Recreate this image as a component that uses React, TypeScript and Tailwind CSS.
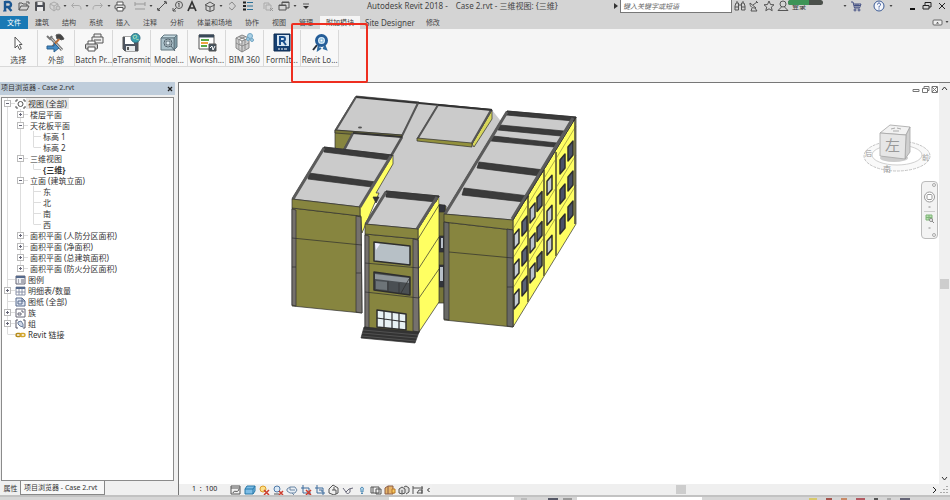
import type { ReactNode } from 'react'
import clsx from 'clsx'

interface IconProps {
  w?: number
  h?: number
  children: ReactNode
  className?: string
}

function Icon({ w = 12, h = 12, children, className }: IconProps) {
  return (
    <svg
      width={w}
      height={h}
      viewBox={`0 0 ${w} ${h}`}
      fill="none"
      stroke="#555"
      strokeWidth="1"
      className={clsx('shrink-0', className)}
      aria-hidden="true"
    >
      {children}
    </svg>
  )
}

const icons = {
  revit: (
    <Icon>
      <path d="M3 1v10M3 2h3.500a2.300 2.300 0 0 1 0 5H3M6 7l3.500 4" stroke="#1c5791" strokeWidth="2.400" />
      <path d="M1 11h3.500" stroke="#1c5791" />
    </Icon>
  ),
  open: (
    <Icon>
      <path d="M1 10V3h3l1 1h4v2M1 10l2-4h8l-2 4zM8 2h3v2" />
    </Icon>
  ),
  save: (
    <Icon>
      <path d="M1.500 2h8l1 1v7.500h-9z" fill="#4b4e57" />
      <path d="M3.500 2h5v3h-5zM3 7h6v4H3z" fill="#e9e9e9" stroke="none" />
    </Icon>
  ),
  sync: (
    <Icon>
      <path d="M1 4l4-2 4 2v4l-4 3-4-3zM1 4l4 2 4-2M5 6v5" stroke="#aaa" />
      <circle cx="9" cy="8" r="2" stroke="#aaa" fill="#ccc" />
    </Icon>
  ),
  undo: (
    <Icon>
      <path d="M4 3L1.500 5.500 4 8M2 5.500h6c2 0 3 1 3 4" stroke="#aaa" />
    </Icon>
  ),
  redo: (
    <Icon>
      <path d="M8 3l2.500 2.500L8 8M10 5.500H4c-2 0-3 1-3 4" stroke="#aaa" />
    </Icon>
  ),
  print: (
    <Icon>
      <path d="M3 5V2h6v3" fill="#fff" />
      <rect x="1" y="5" width="10" height="4" rx="1" fill="#ddd" />
      <path d="M3 7.500h6V11H3z" fill="#fff" />
    </Icon>
  ),
  dimension: (
    <Icon>
      <path d="M1 4h10M1 2v4M11 2v4M1 9h10" stroke="#999" />
    </Icon>
  ),
  measure: (
    <Icon>
      <path d="M2 10l8-8M1 8l3 3M8 1l3 3" />
      <path d="M1.500 9l1.500 1.500M9 1.500L10.500 3" strokeWidth="2" />
    </Icon>
  ),
  tag: (
    <Icon>
      <circle cx="7" cy="5" r="3.500" />
      <path d="M7 3v4M6 4l1-1M4 8l-3 3M1 8v3h3" />
    </Icon>
  ),
  text: (
    <Icon>
      <path d="M2 11L6 2l4 9M3.500 8h5" strokeWidth="1.700" stroke="#333" />
    </Icon>
  ),
  house: (
    <Icon>
      <path d="M1 5l5-3 5 3-5 2zM2 6v4l4 1.500 4-1.500V6M6 7v4" />
    </Icon>
  ),
  section: (
    <Icon>
      <path d="M6 2l3.500 4L6 10 3 7.500M3 4.500L6 2" stroke="#888" />
    </Icon>
  ),
  thin: (
    <Icon>
      <path d="M1 2.500h3M1 6h3M1 9.500h3" stroke="#222" strokeWidth="2" />
      <path d="M5 2.500h6M5 6h6M5 9.500h6" stroke="#2a7098" />
    </Icon>
  ),
  closeHidden: (
    <Icon>
      <path d="M2 9V3h5v2M4 5h5v5H4z" stroke="#aaa" />
      <path d="M8 8l3 3M11 8l-3 3" stroke="#999" />
    </Icon>
  ),
  windows: (
    <Icon>
      <path d="M4 5V2h7v6H8M1 5h7v5H1zM4 2.500h7M1 5.500h7" />
    </Icon>
  ),
  customize: (
    <Icon w={8}>
      <path d="M1 4h6" />
      <path d="M1 6h6l-3 3z" fill="#333" stroke="none" />
    </Icon>
  ),
}

function Caret() {
  return (
    <span className="flex w-[6px] shrink-0 justify-center">
      <Icon w={4} h={3}>
        <path d="M.5 0h3L2 2z" fill="#444" stroke="none" />
      </Icon>
    </span>
  )
}

interface ToolProps {
  label: string
  children: ReactNode
  className?: string
}

function Tool({ label, children, className }: ToolProps) {
  return (
    <button type="button" aria-label={label} className={clsx('flex shrink-0 items-center justify-center', className ?? 'w-4')}>
      {children}
    </button>
  )
}

function QuickAccess() {
  return (
    <div className="flex w-[306px] shrink-0 items-center">
      <Tool label="Revit">{icons.revit}</Tool>
      <Tool label="打开">{icons.open}</Tool>
      <Tool label="保存">{icons.save}</Tool>
      <Tool label="同步" className="w-[14px]">{icons.sync}</Tool>
      <Caret />
      <Tool label="放弃">{icons.undo}</Tool>
      <Caret />
      <Tool label="重做">{icons.redo}</Tool>
      <Caret />
      <Tool label="打印">{icons.print}</Tool>
      <Tool label="测量" className="ml-1 w-4">{icons.dimension}</Tool>
      <Caret />
      <Tool label="对齐尺寸标注">{icons.measure}</Tool>
      <Tool label="标记">{icons.tag}</Tool>
      <Tool label="文字" className="w-3">{icons.text}</Tool>
      <Tool label="默认三维视图" className="ml-1 w-4">{icons.house}</Tool>
      <Caret />
      <Tool label="剖面">{icons.section}</Tool>
      <Tool label="细线">{icons.thin}</Tool>
      <Tool label="关闭隐藏窗口" className="ml-1 w-4">{icons.closeHidden}</Tool>
      <Tool label="切换窗口">{icons.windows}</Tool>
      <Caret />
      <Tool label="自定义" className="ml-1 w-2">{icons.customize}</Tool>
    </div>
  )
}

function TitleBar() {
  return (
    <header className="flex h-4 items-center pb-1">
      <QuickAccess />
      <h1 className="flex flex-1 gap-2 pl-[61px] whitespace-pre text-[8px] text-[#444]">
        <span>Autodesk Revit 2018 -</span>
        <span>Case 2.rvt - 三维视图: {'{三维}'}</span>
      </h1>
      <div className="flex w-[337px] shrink-0 items-center">
        <Icon w={7} h={8}>
          <path d="M1 1l4 3-4 3z" fill="#333" stroke="none" />
        </Icon>
        <input
          aria-label="搜索"
          placeholder="键入关键字或短语"
          className="h-[14px] w-[112px] border border-[#777] bg-white px-[2px] text-[7px] italic text-[#444] outline-none placeholder:text-[#666]"
        />
        <Tool label="查找" className="w-[15px]">
          <Icon>
            <path d="M2 3h2.500v7H1V6zM10 3H7.500v7H11V6zM4.500 5h3M2 2h2M8 2h2M1 7h3.500M7.500 7H11" />
          </Icon>
        </Tool>
        <Tool label="通讯中心" className="w-[14px]">
          <Icon>
            <path d="M2 3c0 4 2 5 6 5L2 3zM5 5l4-3M8 1l2 2M4 8l-1 3h6L7 8" />
          </Icon>
        </Tool>
        <Tool label="收藏夹" className="w-[15px]">
          <Icon>
            <path d="M6 1l1.500 3.500 3.500.3-2.700 2.300.9 3.600L6 8.800 2.800 10.700l.9-3.600L1 4.800l3.500-.3z" />
          </Icon>
        </Tool>
        <Tool label="用户" className="w-[14px]">
          <Icon>
            <circle cx="6" cy="4" r="3" />
            <path d="M4.500 7L1 10.500h10L7.500 7" />
          </Icon>
        </Tool>
        <div className="relative ml-[2px] w-[50px]">
          <button type="button" className="block text-[7px] leading-[13px] text-[#333]">登录</button>
          <div className="absolute -left-1 top-0 h-[5px] w-[35px] overflow-hidden rounded-full bg-[#4b504b]">
            <div className="h-full w-[21px] bg-[#3d9456]" />
          </div>
        </div>
        <Caret />
        <Tool label="应用商店">
          <Icon>
            <path d="M1 2h2l1.500 6h5L11 4H3.500" stroke="#445083" />
            <path d="M4 5.500h6M6 4v4M8 4v4" stroke="#445083" />
            <circle cx="5" cy="10" r="1" stroke="#445083" />
            <circle cx="9" cy="10" r="1" stroke="#445083" />
          </Icon>
        </Tool>
        <Tool label="帮助" className="ml-[6px] w-[18px]">
          <Icon>
            <circle cx="6" cy="6" r="5" stroke="#3b5b95" fill="#f4f6fa" />
            <path d="M4.500 4.500c0-2 3-2 3 0C7.500 6 6 5.500 6 7.500M6 8.500v1" stroke="#2b4b95" />
          </Icon>
        </Tool>
        <Caret />
        <Tool label="最小化" className="ml-[10px] w-4">
          <Icon>
            <path d="M4 9h5" stroke="#111" strokeWidth="2" />
          </Icon>
        </Tool>
        <Tool label="还原" className="w-[14px]">
          <Icon>
            <path d="M4 5V2.500h6V7H8M2 5.500h6V9H2zM4 2.500h6M2 5.500h6" stroke="#222" />
          </Icon>
        </Tool>
        <Tool label="关闭" className="w-[15px]">
          <Icon>
            <path d="M3 3l6 6M9 3L3 9" stroke="#222" />
          </Icon>
        </Tool>
      </div>
    </header>
  )
}

const tabs = ['建筑', '结构', '系统', '插入', '注释', '分析', '体量和场地', '协作', '视图', '管理', '附加模块', 'Site Designer', '修改']

function RibbonTabs() {
  return (
    <nav className="flex h-[13px] items-stretch gap-px text-[7px] leading-[13px] text-[#444]">
      <button type="button" className="w-7 bg-[#1979b5] text-white">文件</button>
      {tabs.map((tab) => (
        <button
          key={tab}
          type="button"
          className={clsx(
            'whitespace-nowrap',
            tab === 'Site Designer' ? 'px-1 text-[8px]' : 'px-[6px]',
            tab === '附加模块' && 'bg-[#f5f5f5]',
          )}
        >
          {tab}
        </button>
      ))}
      <button type="button" aria-label="最小化功能区" className="ml-auto flex items-center gap-px">
        <Icon w={11} h={8}>
          <rect x="1" y="1" width="9" height="5" rx="1" fill="#eee" stroke="#666" />
          <path d="M4 4.500h3L5.500 3z" fill="#333" stroke="none" />
        </Icon>
        <Caret />
      </button>
    </nav>
  )
}

const ribbonButtons: { label: string; icon: ReactNode }[] = [
  {
    label: '选择',
    icon: (
      <Icon w={20} h={20}>
        <path d="M7 4v11l2.500-2.500 2 4 1.800-1-2-4H14z" fill="#fff" />
      </Icon>
    ),
  },
  {
    label: '外部',
    icon: (
      <Icon w={20} h={20}>
        <path d="M4 4l12 13" stroke="#777" strokeWidth="3" />
        <path d="M4 4l12 13" stroke="#ddd" />
        <path d="M1 3l3 3 2-3" stroke="#777" strokeWidth="2" />
        <path d="M14 5L6 14" stroke="#b86f3c" strokeWidth="2" />
        <path d="M10 2c4-2 6 0 8 4l-3 1-2-2-2 1z" fill="#444" />
        <path d="M1 13h7v-3l5 5-5 4v-3H1z" fill="#448bc5" stroke="#2b6090" />
      </Icon>
    ),
  },
  {
    label: 'Batch Pr...',
    icon: (
      <Icon w={20} h={20}>
        <path d="M10 4V1h7v3M8 4h11v6H8zM10 7h7" fill="#eee" />
        <path d="M4 11V8h7v3" fill="#fff" />
        <rect x="1.500" y="11" width="12" height="5" rx="1" fill="#ccc" />
        <path d="M4 14h7v4H4z" fill="#fff" />
      </Icon>
    ),
  },
  {
    label: 'eTransmit',
    icon: (
      <Icon w={20} h={20}>
        <path d="M2 4h15v14H4l-2-2z" fill="#4e5663" />
        <path d="M4 4h9v7H4z" fill="#fff" stroke="none" />
        <path d="M5 13h9v5H5z" fill="#e8ebed" stroke="none" />
        <path d="M7 14v3" strokeWidth="2" />
        <circle cx="14.500" cy="5" r="4.500" fill="#38a0b0" stroke="#347085" />
        <path d="M12 3l3-1 1 2-3 2zM15 6l3 1" stroke="#a0d4b0" />
      </Icon>
    ),
  },
  {
    label: 'Model...',
    icon: (
      <Icon w={20} h={20}>
        <path d="M2 5l3-3h13l-3 3z" fill="#c6dbe2" stroke="#627780" />
        <path d="M15 5l3-3v12l-3 3z" fill="#7e9ba6" stroke="#627780" />
        <path d="M2 5h13v12H2z" fill="#abc1ca" stroke="#627780" />
        <circle cx="9" cy="10" r="4" fill="#deecf2" stroke="#52636d" />
        <path d="M7 8h4v4H7zM12 13l4 5" stroke="#52636d" />
      </Icon>
    ),
  },
  {
    label: 'Worksh...',
    icon: (
      <Icon w={20} h={20}>
        <path d="M2 2h15v14H2z" fill="#fff" />
        <path d="M2 3h15" stroke="#384858" strokeWidth="3" />
        <path d="M4 7h8" stroke="#57a947" strokeWidth="2" />
        <path d="M4 10h7" stroke="#efa440" strokeWidth="2" />
        <path d="M4 13h6" stroke="#57a947" strokeWidth="2" />
        <path d="M12 11h7v7h-7z" fill="#42515d" />
        <path d="M13 15l2-2 1 4 2-4" stroke="#fff" />
      </Icon>
    ),
  },
  {
    label: 'BIM 360',
    icon: (
      <Icon w={20} h={20}>
        <path d="M2 5l6-3 7 3v10l-7 4-6-4zM2 5l6 3 7-3M8 8v11M2 10l6 3 7-3M5 3.500l6 3v10M12 3.500l-7 3v10" fill="#ccc" stroke="#888" />
        <circle cx="16" cy="3" r="2.500" fill="#a9d0e6" stroke="#72a6c3" />
        <circle cx="14" cy="6" r="1.500" fill="#a9d0e6" stroke="#72a6c3" />
        <circle cx="18" cy="7" r="1.500" fill="#a9d0e6" stroke="#72a6c3" />
      </Icon>
    ),
  },
  {
    label: 'FormIt...',
    icon: (
      <Icon w={20} h={20}>
        <path d="M2 1h16v17H2z" fill="#153f72" stroke="#0f2c50" />
        <path d="M5 2h12v11H5z" fill="#d7e6f3" stroke="none" />
        <path d="M8 12V4h3a2 2 0 0 1 0 4H8M11 8l3 4" stroke="#1a4f8d" strokeWidth="2" />
        <path d="M6 16h2M9 16h2M12 16h3" stroke="#fff" />
      </Icon>
    ),
  },
  {
    label: 'Revit Lo...',
    icon: (
      <Icon w={20} h={20}>
        <path d="M7 12L3 17" stroke="#252d37" strokeWidth="2" />
        <path d="M9 11l-1 6 3-2M14 11l2 5-3-1" stroke="#2d6aa0" strokeWidth="2" />
        <circle cx="11.500" cy="7.500" r="5" fill="#d9ecf8" stroke="#245d98" strokeWidth="3" />
        <path d="M10 6h3v3h-3z" fill="#fff" stroke="#76afd6" />
      </Icon>
    ),
  },
]

function Ribbon() {
  return (
    <section className="h-[53px] bg-[#f5f5f5] pt-px">
      <div className="grid w-[339px] grid-cols-9">
        {ribbonButtons.map(({ label, icon }) => (
          <button
            key={label}
            type="button"
            className="flex h-[37px] flex-col items-center justify-between border-r border-b border-[#d9d9d9] bg-[#f8f8f8] pt-[3px] text-[#444]"
          >
            {icon}
            <span className="text-[8px] leading-[12px] whitespace-nowrap">{label}</span>
          </button>
        ))}
      </div>
    </section>
  )
}

type Expander = 'open' | 'closed'

interface Row {
  text: string
  level: number
  expander?: Expander
  icon?: ReactNode
  last?: boolean
}

const treeIcons = {
  views: (
    <Icon w={11} h={10}>
      <path d="M1 3V1h2M8 1h2v2M10 7v2H8M3 9H1V7" />
      <circle cx="5.500" cy="5" r="2.500" />
    </Icon>
  ),
  legend: (
    <Icon w={11} h={10}>
      <path d="M1 1h9v8H1z" fill="#eef1f6" stroke="#667" />
      <path d="M1 2h9" stroke="#556a8c" strokeWidth="2" />
      <path d="M3 5h1M6 5h3M3 7h1M6 7h3" stroke="#667" />
    </Icon>
  ),
  schedule: (
    <Icon w={11} h={10}>
      <path d="M1 1h9v8H1zM4 1v8M7 1v8M1 6h9" fill="#fff" stroke="#8a92a8" />
      <path d="M1 2h9" stroke="#556a8c" strokeWidth="2" />
    </Icon>
  ),
  sheets: (
    <Icon w={11} h={10}>
      <path d="M1 1h6l3 3v5H1z" fill="#dfe6f2" stroke="#596a8c" />
      <path d="M3 4h4v3H3zM7 1v3h3" stroke="#596a8c" />
    </Icon>
  ),
  family: (
    <Icon w={11} h={10}>
      <path d="M1 1h9v8H1zM3 5h3v2H3zM6 3h2v2" fill="#fff" stroke="#667" />
    </Icon>
  ),
  group: (
    <Icon w={11} h={10}>
      <path d="M3 1H1v8h2M8 1h2v8H8" stroke="#556" />
      <path d="M3 3l3-1 2 3v3L5 7 3 5z" fill="#d0d8e8" stroke="#667a9a" />
    </Icon>
  ),
  link: (
    <Icon w={11} h={10}>
      <rect x="1" y="3.500" width="5" height="3" rx="1.500" stroke="#b48a1a" strokeWidth="1.500" />
      <rect x="5" y="3.500" width="5" height="3" rx="1.500" stroke="#d3a62c" strokeWidth="1.500" />
    </Icon>
  ),
}

const rows: Row[] = [
  { text: '视图 (全部)', level: 0, expander: 'open', icon: treeIcons.views },
  { text: '楼层平面', level: 1, expander: 'closed' },
  { text: '天花板平面', level: 1, expander: 'open' },
  { text: '标高 1', level: 2 },
  { text: '标高 2', level: 2, last: true },
  { text: '三维视图', level: 1, expander: 'open' },
  { text: '{三维}', level: 2, last: true },
  { text: '立面 (建筑立面)', level: 1, expander: 'open' },
  { text: '东', level: 2 },
  { text: '北', level: 2 },
  { text: '南', level: 2 },
  { text: '西', level: 2, last: true },
  { text: '面积平面 (人防分区面积)', level: 1, expander: 'closed' },
  { text: '面积平面 (净面积)', level: 1, expander: 'closed' },
  { text: '面积平面 (总建筑面积)', level: 1, expander: 'closed' },
  { text: '面积平面 (防火分区面积)', level: 1, expander: 'closed', last: true },
  { text: '图例', level: 0, icon: treeIcons.legend },
  { text: '明细表/数量', level: 0, expander: 'closed', icon: treeIcons.schedule },
  { text: '图纸 (全部)', level: 0, icon: treeIcons.sheets },
  { text: '族', level: 0, expander: 'closed', icon: treeIcons.family },
  { text: '组', level: 0, expander: 'closed', icon: treeIcons.group },
  { text: 'Revit 链接', level: 0, icon: treeIcons.link, last: true },
]

// one 13px wide cell of the tree: guide line, branch and the +/- box
function Guide({ branch, expander, last }: { branch?: boolean; expander?: Expander; last?: boolean }) {
  return (
    <Icon w={13} h={11}>
      <path d={last ? 'M5.500 0v5' : 'M5.500 0v11'} stroke="#ddd" />
      {branch && <path d="M5.500 5.500H13" stroke="#ddd" />}
      {expander && (
        <>
          <rect x="2.500" y="2.500" width="6" height="6" fill="#fff" stroke="#bbb" />
          <path d={expander === 'closed' ? 'M4 5.500h3M5.500 4v3' : 'M4 5.500h3'} stroke="#667" />
        </>
      )}
    </Icon>
  )
}

function TreeRow({ row }: { row: Row }) {
  const { text, level, expander, icon, last } = row
  return (
    <li className="flex h-[11px] items-center">
      {[0, 1, 2].slice(0, level + 1).map((depth) => (
        <Guide
          key={depth}
          branch={depth === level}
          expander={depth === level ? expander : undefined}
          last={depth === level && last}
        />
      ))}
      {icon}
      <span
        className={clsx(
          'px-[2px] whitespace-nowrap text-[8px] leading-[11px] text-[#333]',
          text === '{三维}' && 'font-bold',
          text === '视图 (全部)' && 'bg-[#e9e9e9]',
        )}
      >
        {text}
      </span>
    </li>
  )
}

function ProjectBrowser() {
  return (
    <aside className="flex w-[175px] shrink-0 flex-col">
      <div className="flex h-[13px] shrink-0 items-center justify-between bg-[#bfcddb] px-px text-[7px] text-[#333]">
        <h2>项目浏览器 - Case 2.rvt</h2>
        <button type="button" aria-label="关闭项目浏览器">
          <Icon w={8} h={8}>
            <path d="M2 2l4 4M6 2L2 6" stroke="#222" strokeWidth="1.300" />
          </Icon>
        </button>
      </div>
      <div className="mx-px mt-[2px] min-h-0 flex-1 border border-[#8b8b8b] bg-white">
        <ul>
          {rows.map((row) => (
            <TreeRow key={row.text} row={row} />
          ))}
        </ul>
      </div>
      <div className="flex h-[14px] shrink-0 pl-px text-[7px] leading-[13px] text-[#333]">
        <button type="button" className="w-5 border-r border-[#888]">属性</button>
        <button type="button" className="w-[84px] border-r border-b border-[#888] bg-[#f8f8f8] pl-[3px] text-left whitespace-nowrap">
          项目浏览器 - Case 2.rvt
        </button>
      </div>
    </aside>
  )
}

const windowColumns = [
  { x: 514, glass: '#c4cbd2' },
  { x: 522, glass: '#596276' },
  { x: 530, glass: '#b9c1ca' },
  { x: 537, glass: '#596276' },
  { x: 547, glass: '#c4cbd2' },
  { x: 560, glass: '#4a5268' },
  { x: 568, glass: '#4a5268' },
]

function sidePoints(x: number, row: number) {
  const y = 239 - 1.63 * (x - 514) + row * 30
  return `${x},${y - 4} ${x + 5},${y - 10} ${x + 5},${y + 4} ${x},${y + 10}`
}

function Building() {
  return (
    <svg viewBox="280 85 310 265" width="310" height="265" className="ml-[101px] mt-[2px] shrink-0" role="img" aria-label="三维模型">
      <g stroke="#2e2e2e" strokeWidth=".7" strokeLinejoin="round">
        {/* rear wing */}
        <path d="M335 130l68 6v12l-60 5-8-5z" fill="#87853f" />
        <path d="M419 102l73 8 8 10 2 10-50 90-12-12v-11l-52-3-16 12-8-5 28-46 11-19z" fill="#cbcbcb" stroke="none" />
        <path d="M356 96l63 6-17 33-67-5z" fill="#cbcbcb" />
        <path d="M356 97l63 6 73 7" fill="none" stroke="#333" strokeWidth="2" />
        <path d="M356 97l-20 33M418 103l-16 33" fill="none" stroke="#555" strokeWidth="2" />
        <path d="M335 130l67 5v3l-67-5z" fill="#77753a" />
        <ellipse cx="360" cy="127.500" rx="2" ry="1" fill="#555" stroke="none" />
        <path d="M492 110v9l-18 28-2-3z" fill="#d8d75c" />
        <path d="M438 105l54 5-20 34-55-5z" fill="#cbcbcb" />
        <path d="M438 105l-20 33M491 110l-19 33" fill="none" stroke="#555" strokeWidth="2" />
        <path d="M438 105l54 5" stroke="#333" strokeWidth="2" />
        <path d="M417 138l55 5v4l-55-6z" fill="#93913d" />

        {/* left wing */}
        <path d="M353 133l49 4-11 19-49-4z" fill="#cbcbcb" />
        <path d="M353 133l-10 19M402 137l-11 19" stroke="#555" strokeWidth="2.500" />
        <path d="M353 133l49 4" stroke="#333" strokeWidth="2" />
        <path d="M393 155v9l-17 29h3l-12 28-5 12-2-18v-8z" fill="#ffff62" />
        <path d="M373 197h6l-3 6z" fill="#333" />
        <path d="M324 147l68 8-32 52-68-8z" fill="#cbcbcb" />
        <path d="M324 147l68 8-3 5-65-8zM309 173l67 9-4 5-64-8z" fill="#3b3b3b" />
        <path d="M324 148l-31 51M391 156l-31 51" stroke="#5b5b5b" strokeWidth="3" />
        <path d="M292 208l69 8 1 97-70-7z" fill="#87853f" />
        <path d="M292 199l68 8v9l-68-8z" fill="#87853f" />
        <path d="M292 209l4 1v96l-4-1zM356 216l5 1 1 96-6-1z" fill="#75716d" />
        <path d="M292 238l70 7M292 267h4M356 273h5" fill="none" />

        {/* gap behind the entrance tower */}
        <path d="M438 204l8 2v97h-8z" fill="#77753a" />
        <path d="M439 205h6v7h-6zM439 236h5v16h-5zM439 265h5v22h-5z" fill="#32343b" />
        <path d="M441 238h2v10h-2zM440 267h3v14h-3z" fill="#b8bfc8" stroke="none" />

        {/* entrance tower */}
        <path d="M418 229l21-33v106l-20 30z" fill="#ffff62" />
        <path d="M386 191l53 5-21 33-53-5z" fill="#cbcbcb" />
        <path d="M386 191l53 5-3 6-50-5z" fill="#3b3b3b" />
        <path d="M386 192l-20 32M437 197l-20 32" stroke="#5b5b5b" strokeWidth="3" />
        <path d="M365 234l53 5 1 94-54-5z" fill="#87853f" />
        <path d="M365 224l53 5v10l-53-5z" fill="#87853f" />
        <path d="M365 235l4 1v92l-4-1zM413 239l5 1 1 92-6-1z" fill="#75716d" />
        <path d="M365 263l54 5 20-31M365 292l54 6 20-29M418 239l21-34" fill="none" />
        <path d="M374 242l36 4v19l-36-4z" fill="#b7c0c6" strokeWidth="1.500" />
        <path d="M375 243l5 1-4 6z" fill="#eef" stroke="none" />
        <path d="M374 272l36 5v18l-36-5z" fill="#4a4f53" strokeWidth="1.500" />
        <path d="M375 274l34 4v5l-34-4z" fill="#8f969b" stroke="none" />
        <path d="M376 281l11 1v8l-11-1z" fill="#6d7478" stroke="none" />
        <path d="M388 281v10M399 283v10M409 279l-8 14" />
        <path d="M377 310l29 4v16l-29-3z" fill="#e8f2f4" strokeWidth="1.500" />
        <path d="M384 311v16M392 312v16M399 313v16M377 318l29 4" strokeWidth="1.200" />
        <path d="M364 327l55 5-4 11-54-5z" fill="#333" />
        <path d="M363 330l55 5M362 333l55 5M361 336l55 5" stroke="#666" strokeWidth=".6" />

        {/* right wing, street side */}
        <path d="M513 220l63-103v107l-63 103z" fill="#ffff62" />
        <path d="M513 229l63-103M513 258l63-103M513 288l63-103" fill="none" stroke="#8f8d3c" />
        <path d="M528 197v105M544 170v106M556 152v104" stroke="#77753a" strokeWidth="2" />
        <path d="M575 118v106" stroke="#444" strokeWidth="1.500" />
        {windowColumns.map(({ x, glass }) =>
          [0, 1, 2].map((row) => (
            <polygon key={`${x}-${row}`} points={sidePoints(x, row)} fill={glass} strokeWidth="1.500" />
          )),
        )}

        {/* right wing roofs */}
        <path d="M507 111l69 6-63 103-69-6z" fill="#cbcbcb" />
        <path d="M507 111l69 6-2 4-68-6zM500 125l64 6-3 5-63-6zM493 136l64 7-3 4-63-6zM479 162l65 8-4 6-63-8zM464 188l65 8-5 6-62-7z" fill="#3b3b3b" />
        <path d="M507 112l-62 102M573 118l-61 101" stroke="#5b5b5b" strokeWidth="3" />
        <path d="M576 117l-63 103" />

        {/* right wing, front */}
        <path d="M444 222l69 8v97l-69-7z" fill="#87853f" />
        <path d="M444 214l69 6v10l-69-8z" fill="#87853f" />
        <path d="M444 222l5 1v97l-5-1zM507 229l6 1v97l-6-1z" fill="#696965" />
        <path d="M449 252l64 6M507 287h6" />
      </g>
    </svg>
  )
}

function ViewCube() {
  return (
    <svg width="76" height="58" viewBox="858 120 76 58" className="absolute top-[37px] right-1" role="img" aria-label="ViewCube">
      <ellipse cx="896" cy="156" rx="33" ry="15" fill="#f9f9f9" stroke="#c4c4c4" strokeDasharray="3 1" />
      <ellipse cx="896" cy="155" rx="25" ry="10" fill="#fff" stroke="#d0d0d0" />
      <ellipse cx="893" cy="158" rx="14" ry="4" fill="#ccc" />
      <g stroke="#a5a5a5" strokeWidth=".8" strokeLinejoin="round">
        <path d="M879 133l10-8 20 2-4 8z" fill="#f2f2f2" />
        <path d="M905 135l4-8v25l-5 7z" fill="#cfcfcf" />
        <path d="M879 133l26 2-1 24-25-3z" fill="#e6e6e6" />
      </g>
      <path d="M890 129l4-1M896 128l4 1M892 131h6" stroke="#aaa" />
      <g fontFamily="'Noto Sans CJK SC', sans-serif" fill="#999">
        <text x="884" y="151" fontSize="15">左</text>
        <text x="864" y="156" fontSize="7">后</text>
        <text x="882" y="172" fontSize="8">南</text>
        <text x="921" y="160" fontSize="7">前</text>
      </g>
    </svg>
  )
}

function NavigationBar() {
  return (
    <div className="absolute top-[98px] right-px flex w-[17px] flex-col items-center rounded-[4px] border border-[#bbb] bg-[#f3f3f3]">
      <Icon w={15} h={56}>
        <circle cx="12" cy="3" r="1.500" stroke="#aaa" />
        <circle cx="12" cy="53" r="1.500" stroke="#aaa" />
        <circle cx="7.500" cy="15" r="5" fill="#fff" stroke="#999" />
        <rect x="5" y="12.500" width="5" height="5" rx="1" stroke="#999" />
        <path d="M6.500 25h2M6.500 46h2" stroke="#888" />
        <path d="M2 29.500h11" stroke="#ccc" />
        <path d="M4 33h6v5H4zM7 33v5M4 35.500h6" fill="#b6ddb0" stroke="#7eb577" />
        <circle cx="9" cy="38" r="1.500" fill="#fff" stroke="#888" />
        <path d="M10 39l2 2" stroke="#888" />
      </Icon>
    </div>
  )
}

const viewControls: { label: string; icon: ReactNode }[] = [
  { label: '详细程度', icon: <path d="M1 2h9v8H1zM1 4h9M3 9c1-4 5 1 6-4" /> },
  { label: '视觉样式', icon: <path d="M1 5l2-3h8v5l-2 3H1zM1 5h8v5M9 5l2-3" fill="#7dbde6" stroke="#2878a8" /> },
  {
    label: '日光路径',
    icon: (
      <>
        <circle cx="5" cy="5" r="3" fill="#fbe08a" stroke="#dd9c26" />
        <path d="M6 6l5 5M11 6l-5 5" stroke="#cc3d2e" strokeWidth="1.500" />
      </>
    ),
  },
  {
    label: '阴影',
    icon: (
      <>
        <circle cx="5" cy="5" r="3" fill="#dae8f5" stroke="#4e7aa8" />
        <path d="M2 10h5" stroke="#555" />
        <path d="M7 7l4 4M11 7l-4 4" stroke="#cc3d2e" strokeWidth="1.500" />
      </>
    ),
  },
  { label: '渲染', icon: <path d="M1 5l3-2h5l2 3-2 3H4L1 7zM4 3v3h5M6 9l2 2" fill="#e7eef5" stroke="#6b87a5" /> },
  {
    label: '裁剪视图',
    icon: (
      <>
        <path d="M3 1v8h8M1 4h8v7" stroke="#3a6b9c" />
        <path d="M6 6l5 5M11 6l-5 5" stroke="#cc3d2e" strokeWidth="1.500" />
      </>
    ),
  },
  { label: '显示裁剪区域', icon: <path d="M3 1v8h8M1 4h8v7M5 6h3v2" stroke="#3a6b9c" /> },
  { label: '锁定三维视图', icon: <path d="M1 5l4-4 5 3v5l-4 2-5-2zM4 6h4v4M6 6V3" fill="#eee" /> },
  { label: '临时隐藏', icon: <path d="M1 4l3 4 3-3 4-1M4 8c0 2 3 2 4 0V5" stroke="#667" /> },
  { label: '显示隐藏图元', icon: <path d="M6 3a2 2 0 0 1 1 3v2H5V6a2 2 0 0 1 1-3M5 9.500h2" fill="#bde1f5" stroke="#5189b2" /> },
  { label: '临时视图属性', icon: <path d="M1 3h8v6H1zM6 5h5v5H6zM3 3v6" /> },
  {
    label: '分析模型',
    icon: (
      <>
        <path d="M1 4l3-2h5v8H1zM4 2v8" fill="#e7b468" stroke="#8a5c46" />
        <path d="M8 5h3v4H8z" fill="#f8ca5d" stroke="#b67628" />
      </>
    ),
  },
  { label: '高亮位移集', icon: <path d="M1 5l3-2 3 2v4l-3 1-3-1zM6 3l2-1 3 2v4l-3 2M4 6v4" fill="#ddd" /> },
  { label: '显示约束', icon: <path d="M1 2v8M1 4h10M10 2v8M5 9h5V6H7z" /> },
]

function ViewControlBar() {
  return (
    <div className="flex h-[11px] shrink-0 items-center bg-[#f0f0f0]">
      <span className="w-[50px] pl-[13px] whitespace-nowrap text-[7px] text-[#222]">1&nbsp; : &nbsp;100</span>
      {viewControls.map(({ label, icon }) => (
        <Tool key={label} label={label} className="w-[14px]">
          <Icon>{icon}</Icon>
        </Tool>
      ))}
      <button type="button" aria-label="向左滚动">
        <Icon w={7} h={8}>
          <path d="M4.500 2l-2 2 2 2" stroke="#222" />
        </Icon>
      </button>
      <div className="flex h-full flex-1 justify-center bg-[#efefef] pt-px">
        <div className="h-[9px] w-[10px] bg-[#cdcdcd]" />
      </div>
      <button type="button" aria-label="向右滚动" className="mr-px">
        <Icon w={8} h={8}>
          <path d="M3 1l3 3-3 3" stroke="#222" />
        </Icon>
      </button>
      <Icon w={11} h={11}>
        <path d="M8 2v1M8 5v1M8 8v1M5 5v1M5 8v1M2 8v1" stroke="#aaa" strokeWidth="2" />
      </Icon>
    </div>
  )
}

function ModelView() {
  return (
    <main className="flex min-w-0 flex-1 flex-col border-t border-l border-[#777]">
      <div className="flex min-h-0 flex-1">
        <div className="relative min-w-0 flex-1 overflow-hidden bg-white">
          <Building />
          <div className="absolute top-[2px] right-0 flex">
            <Tool label="最小化视图" className="w-[9px]">
              <Icon w={9} h={9}>
                <path d="M1 4.500h6v2H1z" stroke="#777" />
              </Icon>
            </Tool>
            <Tool label="还原视图" className="w-[9px]">
              <Icon w={9} h={9}>
                <path d="M3 3V1.500h5v4H6.500M1.500 3.500h5v4h-5z" stroke="#777" />
              </Icon>
            </Tool>
            <Tool label="关闭视图" className="w-[9px]">
              <Icon w={9} h={9}>
                <path d="M2 1.500h5.500v6H2zM2 2l5 5M7 2L2 7" stroke="#777" />
              </Icon>
            </Tool>
          </div>
          <ViewCube />
          <NavigationBar />
        </div>
        <div className="flex w-[11px] shrink-0 flex-col items-center justify-between bg-[#f0f0f0] py-px">
          <button type="button" aria-label="向上滚动">
            <Icon w={9} h={9}>
              <path d="M2 6l2.500-3L7 6" stroke="#333" />
            </Icon>
          </button>
          <div className="h-[10px] w-[9px] bg-[#cdcdcd]" />
          <button type="button" aria-label="向下滚动">
            <Icon w={9} h={9}>
              <path d="M2 3l2.500 3L7 3" stroke="#333" />
            </Icon>
          </button>
        </div>
      </div>
      <ViewControlBar />
    </main>
  )
}

function StatusBar() {
  return (
    <footer className="flex h-[5px] shrink-0 items-end border-t-2 border-[#c2c2c2] bg-[#d6d6d6]">
      <div className="ml-[389px] h-[3px] w-[125px] bg-white" />
      <div className="ml-[7px] h-[2px] w-[6px] bg-[#bbb]" />
      <div className="ml-[21px] h-[2px] w-[10px] bg-[#555866]" />
      <div className="ml-[5px] h-[2px] w-[9px] bg-[#999]" />
      <div className="ml-[5px] h-[3px] w-[125px] bg-white" />
      <div className="mr-[40px] ml-auto flex gap-[9px]">
        <div className="h-[2px] w-2 bg-[#d8c96b]" />
        <div className="h-[2px] w-[6px] bg-[#a5544c]" />
        <div className="h-[2px] w-[6px] bg-[#c98a66]" />
        <div className="h-[2px] w-[9px] bg-[#b35a62]" />
        <div className="h-[2px] w-1 bg-[#555]" />
        <div className="h-[2px] w-1 bg-[#aaa]" />
        <div className="h-[2px] w-[10px] bg-[#667]" />
      </div>
    </footer>
  )
}

export default function App() {
  return (
    <div
      lang="zh-CN"
      className="relative flex h-screen flex-col overflow-hidden bg-[#d4d4d4] font-['Noto_Sans','Noto_Sans_CJK_SC',sans-serif]"
    >
      <TitleBar />
      <RibbonTabs />
      <Ribbon />
      <div className="flex min-h-0 flex-1 gap-[3px] bg-[#f0f0f0]">
        <ProjectBrowser />
        <ModelView />
      </div>
      <StatusBar />
      {/* highlight around the last add-in */}
      <div className="pointer-events-none absolute top-[23px] left-[291px] h-[60px] w-[77px] rounded-[2px] border-2 border-[#ee2e20]" />
    </div>
  )
}
